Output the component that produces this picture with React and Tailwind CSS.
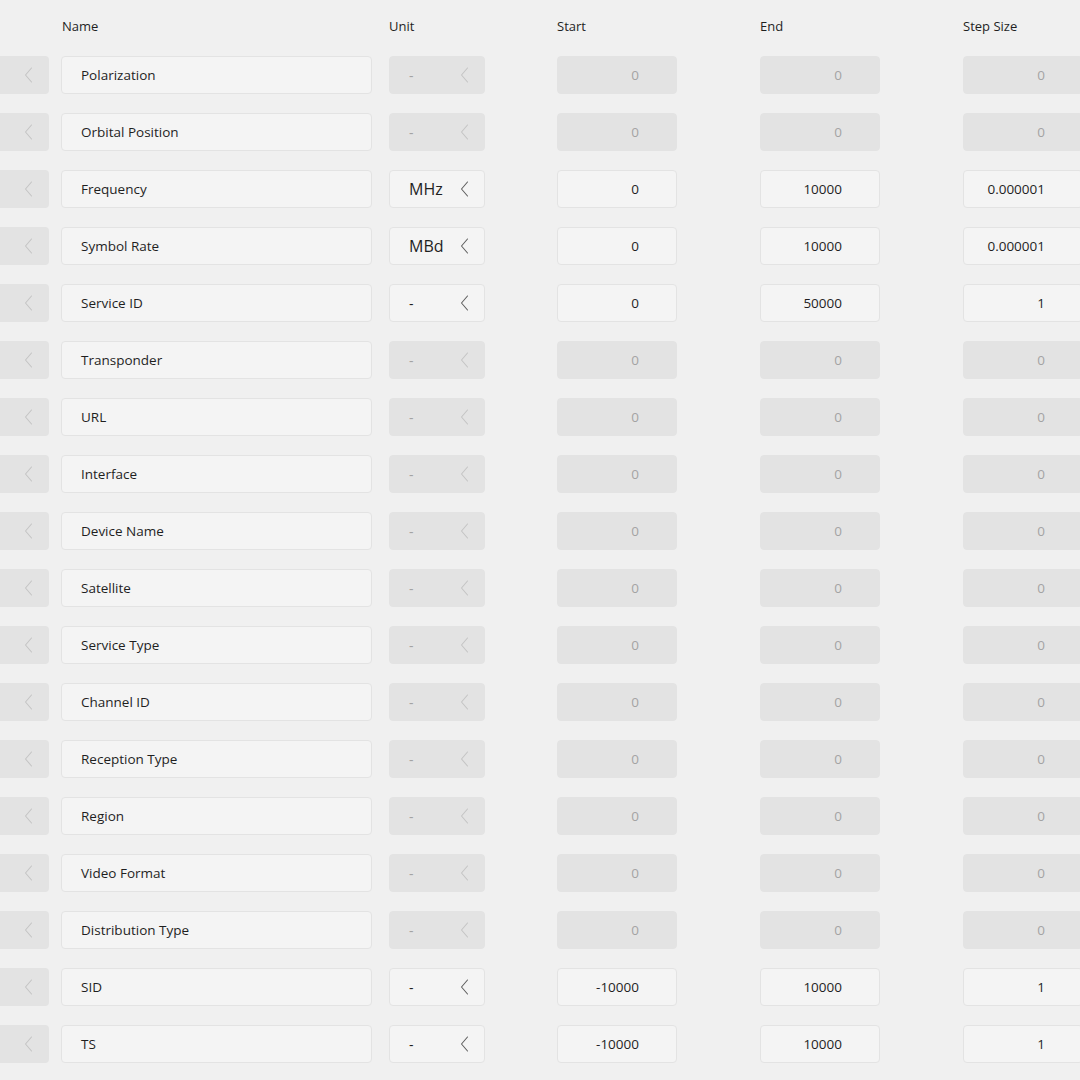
import React from "react";

const rows = [
  { name: "Polarization", unit: "-", s: "0", e: "0", st: "0", on: false },
  { name: "Orbital Position", unit: "-", s: "0", e: "0", st: "0", on: false },
  { name: "Frequency", unit: "MHz", s: "0", e: "10000", st: "0.000001", on: true },
  { name: "Symbol Rate", unit: "MBd", s: "0", e: "10000", st: "0.000001", on: true },
  { name: "Service ID", unit: "-", s: "0", e: "50000", st: "1", on: true },
  { name: "Transponder", unit: "-", s: "0", e: "0", st: "0", on: false },
  { name: "URL", unit: "-", s: "0", e: "0", st: "0", on: false },
  { name: "Interface", unit: "-", s: "0", e: "0", st: "0", on: false },
  { name: "Device Name", unit: "-", s: "0", e: "0", st: "0", on: false },
  { name: "Satellite", unit: "-", s: "0", e: "0", st: "0", on: false },
  { name: "Service Type", unit: "-", s: "0", e: "0", st: "0", on: false },
  { name: "Channel ID", unit: "-", s: "0", e: "0", st: "0", on: false },
  { name: "Reception Type", unit: "-", s: "0", e: "0", st: "0", on: false },
  { name: "Region", unit: "-", s: "0", e: "0", st: "0", on: false },
  { name: "Video Format", unit: "-", s: "0", e: "0", st: "0", on: false },
  { name: "Distribution Type", unit: "-", s: "0", e: "0", st: "0", on: false },
  { name: "SID", unit: "-", s: "-10000", e: "10000", st: "1", on: true },
  { name: "TS", unit: "-", s: "-10000", e: "10000", st: "1", on: true },
];

function Chevron({ on }) {
  return (
    <svg width="9" height="16" viewBox="0 0 9 16" className="shrink-0">
      <polyline
        points="7.5,1 1.5,8 7.5,15"
        fill="none"
        stroke={on ? "#5f5f5f" : "#c4c4c4"}
        strokeWidth="1.1"
        strokeLinejoin="round"
        strokeLinecap="round"
      />
    </svg>
  );
}

const enabledBox = "bg-[#f4f4f4] border border-[#e3e3e3]";
const disabledBox = "bg-[#e3e3e3] border border-[#e3e3e3]";

function NumBox({ v, on, ml }) {
  return (
    <div
      className={`${ml} w-[120px] h-[38px] shrink-0 rounded-[4px] flex items-center justify-end pr-[37px] text-[13.5px] ${
        on ? enabledBox + " text-[#1f1f1f]" : disabledBox + " text-[#a3a3a3]"
      }`}
    >
      {v}
    </div>
  );
}

export default function App() {
  return (
    <div
      className="w-[1080px] h-[1080px] overflow-hidden bg-[#f0f0f0]"
      style={{ fontFamily: '"Segoe UI", "Open Sans", "Noto Sans", sans-serif' }}
    >
      <div className="flex items-center h-[53px] text-[13px] text-[#1f1f1f]">
        <div className="ml-[62px] w-[327px]">Name</div>
        <div className="w-[168px]">Unit</div>
        <div className="w-[203px]">Start</div>
        <div className="w-[203px]">End</div>
        <div>Step Size</div>
      </div>
      <div className="flex flex-col gap-[19px] mt-[3px]">
        {rows.map((r) => (
          <div key={r.name} className="flex items-center h-[38px]">
            <div className="w-[49px] h-[38px] shrink-0 rounded-r-[4px] bg-[#e3e3e3] flex items-center justify-end pr-[16px]">
              <Chevron on={false} />
            </div>
            <div
              className={`ml-[12px] w-[311px] h-[38px] shrink-0 rounded-[4px] ${enabledBox} flex items-center pl-[19px] text-[13.5px] text-[#1f1f1f]`}
            >
              {r.name}
            </div>
            <div
              className={`ml-[17px] w-[96px] h-[38px] shrink-0 rounded-[4px] flex items-center justify-between pl-[19px] pr-[15px] ${
                r.on ? enabledBox + " text-[#1f1f1f]" : disabledBox + " text-[#a3a3a3]"
              } ${r.unit === "-" ? "text-[14px]" : "text-[16px]"}`}
            >
              <span>{r.unit}</span>
              <Chevron on={r.on} />
            </div>
            <NumBox v={r.s} on={r.on} ml="ml-[72px]" />
            <NumBox v={r.e} on={r.on} ml="ml-[83px]" />
            <NumBox v={r.st} on={r.on} ml="ml-[83px]" />
          </div>
        ))}
      </div>
    </div>
  );
}
